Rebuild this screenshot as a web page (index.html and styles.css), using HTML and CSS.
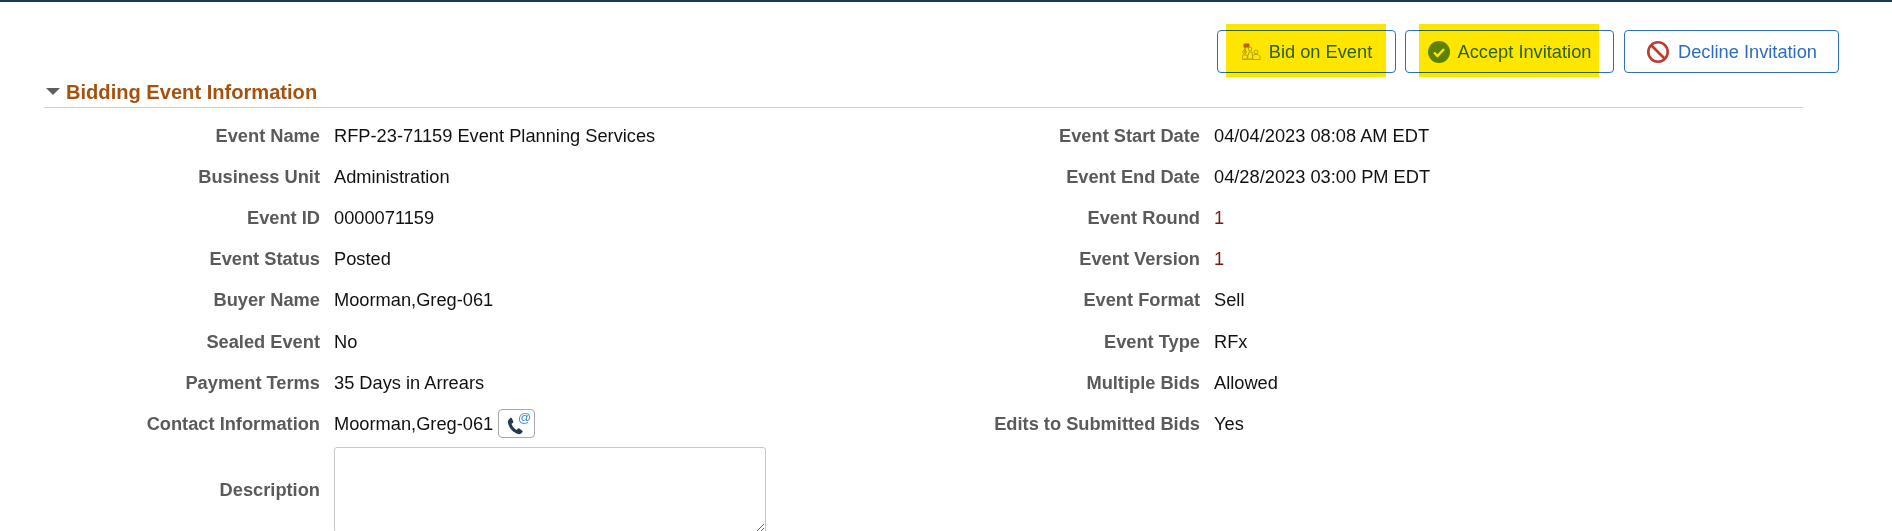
FILE: index.html
```html
<!DOCTYPE html>
<html lang="en">
<head>
<meta charset="utf-8">
<title>Bidding Event Information</title>
<link rel="stylesheet" href="styles.css">
</head>
<body>
<div class="topbar"></div>
<main class="page">
  <div class="actions">
    <a class="btn btn-bid">
      <svg class="ico-bid" viewBox="0 0 20 18" width="20" height="18" fill="none" stroke="#b5b820" stroke-width="1">
        <path d="M4 1v9" stroke="#a8701a"/>
        <path d="M3 1h5v3H3z" fill="#d0641e" stroke="#a8701a"/>
        <circle cx="3.5" cy="9" r="1.8"/>
        <path d="M1 16l1-4h4l1 4z"/>
        <circle cx="9" cy="6" r="1.8"/>
        <circle cx="15" cy="9" r="2"/>
        <path d="M6 16l2-7h3l1 7z"/>
        <path d="M11.500 16.500v-3.500l1.500-1.500h4l2 2v3z"/>
        <path d="M1 16.500h18"/>
      </svg>
      <span>Bid on Event</span>
      <i class="mark mark-bid"></i>
    </a>
    <a class="btn btn-accept">
      <svg viewBox="0 0 22 22" width="22" height="22">
        <circle cx="11" cy="11" r="11" fill="#5d8f0a"/>
        <path d="M6 11.500l3.500 3.500L16 8" fill="none" stroke="#fff" stroke-width="2.400"/>
      </svg>
      <span>Accept Invitation</span>
      <i class="mark mark-accept"></i>
    </a>
    <a class="btn btn-decline">
      <svg viewBox="0 0 24 24" width="24" height="24" fill="none" stroke="#bd3a2e" stroke-width="2.600">
        <circle cx="12" cy="12" r="9.700"/>
        <path d="M5.500 5.500l13 13"/>
      </svg>
      <span>Decline Invitation</span>
    </a>
  </div>

  <h2 class="section-title"><i class="caret"></i>Bidding Event Information</h2>

  <div class="details">
    <div class="col">
      <div class="row"><label class="lbl">Event Name</label><span class="val">RFP-23-71159 Event Planning Services</span></div>
      <div class="row"><label class="lbl">Business Unit</label><span class="val">Administration</span></div>
      <div class="row"><label class="lbl">Event ID</label><span class="val">0000071159</span></div>
      <div class="row"><label class="lbl">Event Status</label><span class="val">Posted</span></div>
      <div class="row"><label class="lbl">Buyer Name</label><span class="val">Moorman,Greg-061</span></div>
      <div class="row"><label class="lbl">Sealed Event</label><span class="val">No</span></div>
      <div class="row"><label class="lbl">Payment Terms</label><span class="val">35 Days in Arrears</span></div>
      <div class="row"><label class="lbl">Contact Information</label><span class="val">Moorman,Greg-061</span>
        <button class="contact" type="button" aria-label="Contact">
          <svg viewBox="0 0 30 26" width="30" height="26">
            <path d="M8 7.500c-1.500 1-2.500 2.500-2 4.500 1 5 5 9.500 10 11 2 .5 3.500-.5 4.500-2 .3-.5.200-1-.2-1.300l-3-2.200c-.5-.3-1-.3-1.300.1l-1.200 1.400c-2.500-1.200-4.500-3.700-5.300-6.300l1.500-1c.4-.3.500-.8.300-1.300l-1.500-3.200c-.3-.5-1-.7-1.800-.2z" fill="#1f3a52"/>
            <text class="at" x="16" y="11">@</text>
          </svg>
        </button>
      </div>
      <div class="row row-desc"><label class="lbl">Description</label><textarea class="desc" aria-label="Description"></textarea></div>
    </div>
    <div class="col">
      <div class="row"><label class="lbl">Event Start Date</label><span class="val">04/04/2023 08:08 AM EDT</span></div>
      <div class="row"><label class="lbl">Event End Date</label><span class="val">04/28/2023 03:00 PM EDT</span></div>
      <div class="row"><label class="lbl">Event Round</label><span class="val num">1</span></div>
      <div class="row"><label class="lbl">Event Version</label><span class="val num">1</span></div>
      <div class="row"><label class="lbl">Event Format</label><span class="val">Sell</span></div>
      <div class="row"><label class="lbl">Event Type</label><span class="val">RFx</span></div>
      <div class="row"><label class="lbl">Multiple Bids</label><span class="val">Allowed</span></div>
      <div class="row"><label class="lbl">Edits to Submitted Bids</label><span class="val">Yes</span></div>
    </div>
  </div>
</main>
</body>
</html>
```
FILE: styles.css
```css
* { box-sizing: border-box; }
html, body { margin: 0; padding: 0; height: 531px; overflow: hidden; background: #fff; }
body { font-family: "Liberation Sans", Arial, sans-serif; font-size: 18.25px; color: #000; }

.topbar { height: 2px; background: #1b3a55; }

.page { padding: 28px 0 0 44px; width: 1803px; }

.actions { display: flex; gap: 9px; margin-right: -36px; justify-content: flex-end; }

.btn {
  position: relative;
  display: flex; align-items: center; justify-content: center; gap: 8px;
  height: 43px;
  border: 1px solid #2d6fc4;
  border-radius: 4px;
  background: #fff;
  color: #2d6dc0;
  white-space: nowrap;
}
.btn-bid { width: 179px; }
.btn-accept { width: 209px; }
.btn-decline { width: 215px; margin-left: 1px; }

.mark {
  position: absolute; top: -7px; height: 53px;
  background: #ffe600;
  mix-blend-mode: multiply;
}
.mark-bid { left: 8px; width: 160px; }
.mark-accept { left: 13px; width: 180px; }

.section-title {
  display: flex; align-items: center;
  margin: 0; height: 35px; padding: 4px 0 0 2px;
  border-bottom: 1px solid #d0d0d4;
  color: #a5520f;
  font-size: 20.1px; font-weight: bold;
}
.caret {
  width: 0; height: 0; margin-right: 6px; margin-top: -2px;
  border-left: 7px solid transparent; border-right: 7px solid transparent;
  border-top: 7px solid #5f5f5f;
}

.details { display: grid; grid-template-columns: 880px 1fr; }

.row { display: flex; align-items: center; height: 41.2px; }
.col > .row:first-child { margin-top: 7px; }
.lbl {
  width: 290px; padding-right: 14px; flex: none;
  text-align: right; font-weight: bold; color: #5a5a5a; white-space: nowrap;
}
.val { color: #111; white-space: nowrap; }
.num { color: #7a1a14; }

.contact {
  display: flex; align-items: center; justify-content: center;
  width: 37px; height: 29px; margin-left: 5px; padding: 0;
  border: 1px solid #a8a8ac; border-radius: 4px; background: #fff;
}
.at { font-family: "Liberation Sans", Arial, sans-serif; font-size: 13px; fill: #3f8fd2; }

.row-desc { height: 86px; margin-top: 2px; }
.desc {
  display: block; width: 432px; height: 86px; padding: 0;
  border: 1px solid #c8c8cc; border-radius: 3px; background: #fff;
  font: 16px "Liberation Sans", Arial, sans-serif;
}
```
